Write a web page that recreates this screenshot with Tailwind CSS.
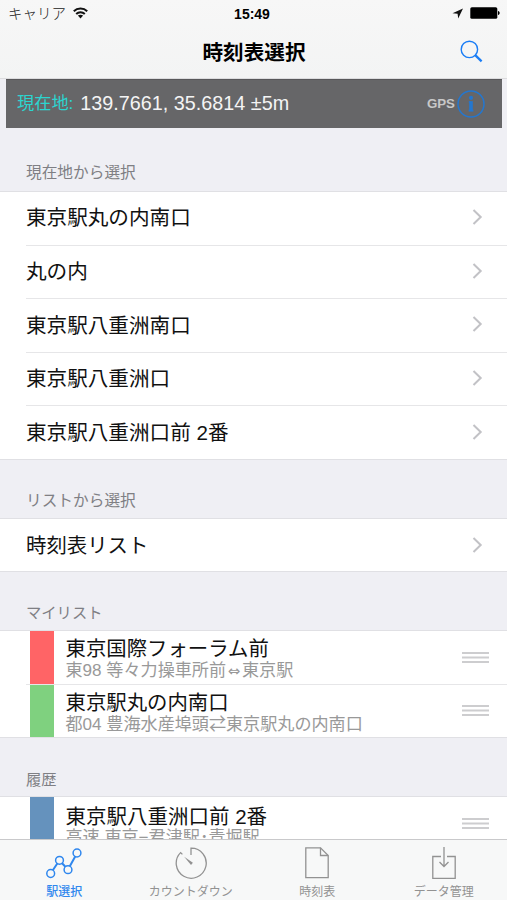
<!DOCTYPE html>
<html lang="ja" class="h-full">

<head>
    <meta charset="UTF-8">
    <title>時刻表選択</title>
    <meta name="viewport" content="width=device-width, initial-scale=1">

    <!-- Tailwind CSS -->
    <script src="https://cdn.jsdelivr.net/npm/@tailwindcss/browser@4"></script>
</head>

<body class="h-screen overflow-hidden flex flex-col bg-[#efeff4] text-[#111] font-['Liberation_Sans','Noto_Sans_CJK_JP',sans-serif]">

    <!-- Header -->
    <header class="h-[79px] shrink-0 bg-gradient-to-b from-[#f7f7f7] to-[#f3f4f4] border-b border-[#dcdcde]">
        <div class="h-7 grid grid-cols-3 items-center pl-2 pr-[7px]">
            <div class="flex items-center gap-[7px]">
                <span class="-mt-0.5 text-[14.5px] leading-6 text-[#222] font-['Noto_Sans_CJK_JP',sans-serif] font-light">キャリア</span>
                <svg class="-mt-0.5 w-[15px] h-3" viewBox="0 0 15 12" fill="none" stroke="#111" stroke-width="2">
                    <path d="M0.8 4.3C4.5 0.6 10.5 0.6 14.2 4.3" />
                    <path d="M3.2 7C5.6 4.6 9.4 4.6 11.8 7" />
                    <path d="M7.5 11.4L4.9 8.6C6.3 7.3 8.7 7.3 10.1 8.6Z" fill="#111" stroke="none" />
                </svg>
            </div>
            <span class="-ml-1 text-center text-[14px] leading-7 font-bold text-black">15:49</span>
            <div class="flex items-center justify-end gap-[7px] -mt-0.5">
                <svg class="w-[11px] h-[11px]" viewBox="0 0 11 11" fill="#111">
                    <path d="M11 0.5L6.2 10.5L5.6 5.8L0.5 5.2Z" />
                </svg>
                <svg class="w-[30px] h-3" viewBox="0 0 30 12" fill="#000">
                    <rect x="0.3" y="0.2" width="27" height="11.6" rx="1.6" />
                    <path d="M28 4C30.2 4.6 30.2 7.4 28 8Z" />
                </svg>
            </div>
        </div>
        <div class="h-12 grid grid-cols-[1fr_auto_1fr] items-center pr-6 pl-[25px]">
            <span></span>
            <h1 class="pt-0.5 text-[20.6px] leading-[46px] font-bold text-black">時刻表選択</h1>
            <svg class="w-[23px] h-[23px] justify-self-end -mt-0.5" viewBox="0 0 23 23" fill="none" stroke="#1a7df5">
                <circle cx="9.4" cy="9.4" r="8.2" stroke-width="1.4" />
                <path d="M15.2 15.2L21.6 21.3" stroke-width="2.3" />
            </svg>
        </div>
    </header>

    <!-- Current location -->
    <div class="h-[49px] shrink-0 ml-1.5 mr-[5px] pl-[11px] pr-[17px] flex items-center bg-[#666668] border-t border-[#58585a]">
        <span class="text-[17.2px] text-[#2bd5d0]">現在地:</span>
        <span class="ml-[7px] text-[19.8px] text-[#f4f4f4]">139.7661, 35.6814 ±5m</span>
        <span class="ml-auto text-[13.3px] font-bold text-[#c8c8c8]">GPS</span>
        <svg class="ml-[2px] w-7 h-7" viewBox="0 0 28 28" fill="none" stroke="#2477cf">
            <circle cx="14" cy="14" r="13" stroke-width="1.5" />
            <path d="M11.8 12H14M11.6 20.6H16.4" stroke-width="1.6" />
            <path d="M14 11.2V21.2" stroke-width="3.6" />
            <circle cx="14" cy="7.8" r="2.1" fill="#2477cf" stroke="none" />
        </svg>
    </div>

    <!-- Lists -->
    <main class="flex-1 min-h-0 overflow-hidden">
        <h2 class="h-[63px] pt-[33px] pl-[26px] text-[15.7px] leading-6 text-[#7f7f84]">現在地から選択</h2>
        <ul class="h-[269px] flex flex-col bg-white border-y border-[#e0e0e4] pl-[26px]">
            <li class="flex-1 flex items-center justify-between pr-6 border-b border-[#e6e6e8]">
                <span class="text-[20.6px]">東京駅丸の内南口</span>
                <svg class="-mt-0.5 w-[11px] h-4" viewBox="0 0 11 16" fill="none" stroke="#c2c2c6" stroke-width="2"><path d="M1.5 1L8.7 8L1.5 15" /></svg>
            </li>
            <li class="flex-1 flex items-center justify-between pr-6 border-b border-[#e6e6e8]">
                <span class="pt-px text-[20.6px]">丸の内</span>
                <svg class="-mt-0.5 w-[11px] h-4" viewBox="0 0 11 16" fill="none" stroke="#c2c2c6" stroke-width="2"><path d="M1.5 1L8.7 8L1.5 15" /></svg>
            </li>
            <li class="flex-1 flex items-center justify-between pr-6 border-b border-[#e6e6e8]">
                <span class="pt-px text-[20.6px]">東京駅八重洲南口</span>
                <svg class="-mt-0.5 w-[11px] h-4" viewBox="0 0 11 16" fill="none" stroke="#c2c2c6" stroke-width="2"><path d="M1.5 1L8.7 8L1.5 15" /></svg>
            </li>
            <li class="flex-1 flex items-center justify-between pr-6 border-b border-[#e6e6e8]">
                <span class="pt-px text-[20.6px]">東京駅八重洲口</span>
                <svg class="-mt-0.5 w-[11px] h-4" viewBox="0 0 11 16" fill="none" stroke="#c2c2c6" stroke-width="2"><path d="M1.5 1L8.7 8L1.5 15" /></svg>
            </li>
            <li class="flex-1 flex items-center justify-between pr-6">
                <span class="pt-0.5 text-[20.6px]">東京駅八重洲口前 2番</span>
                <svg class="-mt-0.5 w-[11px] h-4" viewBox="0 0 11 16" fill="none" stroke="#c2c2c6" stroke-width="2"><path d="M1.5 1L8.7 8L1.5 15" /></svg>
            </li>
        </ul>

        <h2 class="h-[58px] pt-[29px] pl-[26px] text-[15.7px] leading-6 text-[#7f7f84]">リストから選択</h2>
        <ul class="h-[54px] flex flex-col bg-white border-y border-[#e0e0e4] pl-[26px]">
            <li class="flex-1 flex items-center justify-between pr-6">
                <span class="pt-0.5 text-[20.4px]">時刻表リスト</span>
                <svg class="w-[11px] h-4" viewBox="0 0 11 16" fill="none" stroke="#c2c2c6" stroke-width="2"><path d="M1.5 1L8.7 8L1.5 15" /></svg>
            </li>
        </ul>

        <h2 class="h-[58px] pt-[29px] pl-[26px] text-[15.3px] leading-6 text-[#7f7f84]">マイリスト</h2>
        <ul class="h-[108px] flex flex-col bg-white border-y border-[#e0e0e4] pl-[26px]">
            <li class="flex-1 flex items-center pr-[18px] border-b border-[#e6e6e8]">
                <div class="ml-1 w-[23.5px] self-stretch bg-[#ff6466]"></div>
                <div class="ml-3 flex-1 pt-1">
                    <p class="text-[20.4px] leading-[23px]">東京国際フォーラム前</p>
                    <p class="text-[17.1px] leading-[19px] text-[#999]">東98 等々力操車所前<span class="inline-block w-4 text-center text-[15px] leading-4 font-['DejaVu_Sans']">⇔</span>東京駅</p>
                </div>
                <svg class="w-[27px] h-[11px]" viewBox="0 0 27 11" fill="#cdcdcf"><path d="M0 0H27V2H0ZM0 4.5H27V6.5H0ZM0 9H27V11H0Z" /></svg>
            </li>
            <li class="flex-1 flex items-center pr-[18px]">
                <div class="ml-1 w-[23.5px] self-stretch bg-[#7fd17f]"></div>
                <div class="ml-3 flex-1 pt-[5px]">
                    <p class="text-[20.4px] leading-[23px]">東京駅丸の内南口</p>
                    <p class="text-[17.1px] leading-[19px] text-[#999]">都04 豊海水産埠頭⇄東京駅丸の内南口</p>
                </div>
                <svg class="w-[27px] h-[11px]" viewBox="0 0 27 11" fill="#cdcdcf"><path d="M0 0H27V2H0ZM0 4.5H27V6.5H0ZM0 9H27V11H0Z" /></svg>
            </li>
        </ul>

        <h2 class="h-[58px] pt-[30px] pl-[26px] text-[15.3px] leading-6 text-[#7f7f84]">履歴</h2>
        <ul class="h-[54px] flex flex-col bg-white border-y border-[#e0e0e4] pl-[26px]">
            <li class="flex-1 flex items-center pr-[18px]">
                <div class="ml-1 w-[23.5px] self-stretch bg-[#6592bd]"></div>
                <div class="ml-3 flex-1 pt-[5px]">
                    <p class="text-[20.5px] leading-[23px]">東京駅八重洲口前 2番</p>
                    <p class="text-[17.1px] leading-[19px] text-[#999]">高速 東京−君津駅･青堀駅</p>
                </div>
                <svg class="w-[27px] h-[11px]" viewBox="0 0 27 11" fill="#cdcdcf"><path d="M0 0H27V2H0ZM0 4.5H27V6.5H0ZM0 9H27V11H0Z" /></svg>
            </li>
        </ul>
    </main>

    <!-- Tab bar -->
    <nav class="h-[61px] shrink-0 pl-px grid grid-cols-4 bg-[#f7f8f8] border-t border-[#c9c9cb] text-[12px] leading-4 text-[#929292]">
        <a class="flex flex-col items-center pt-[7px] gap-[5px] text-[#2f87ee]">
            <svg class="w-9 h-8" viewBox="0 0 36 32" fill="none" stroke="currentColor" stroke-width="1.5">
                <circle cx="4.7" cy="26.5" r="3.9" />
                <circle cx="13.5" cy="13.3" r="3.9" />
                <circle cx="22" cy="22.7" r="3.9" />
                <circle cx="31" cy="6" r="3.9" />
                <path d="M6.8 23.3L11.3 16.5M16.1 16.2L19.4 19.8M23.8 19.3L29.2 9.4" stroke-width="2" />
            </svg>
            <span class="font-medium">駅選択</span>
        </a>
        <a class="flex flex-col items-center pt-[7px] gap-[5px]">
            <svg class="w-8 h-8" viewBox="0 0 32 32" fill="none" stroke="currentColor" stroke-width="1.3">
                <path d="M16 8V1.2A15 15 0 1 1 5.6 5.6L7.4 7.4" />
                <path d="M9.2 9.8L17.9 15.8L16 18Z" fill="currentColor" stroke="none" />
            </svg>
            <span>カウントダウン</span>
        </a>
        <a class="flex flex-col items-center pt-[7px] gap-[5px]">
            <svg class="w-6 h-8" viewBox="0 0 24 32" fill="none" stroke="currentColor" stroke-width="1.3">
                <path d="M0.8 0.8H15.5L23.2 8.5V30.6H0.8Z" />
                <path d="M15.5 0.8V8.5H23.2" />
            </svg>
            <span>時刻表</span>
        </a>
        <a class="flex flex-col items-center pt-[7px] gap-[5px]">
            <svg class="w-6 h-8" viewBox="0 0 24 32" fill="none" stroke="currentColor" stroke-width="1.3">
                <path d="M9 9.5H0.8V31.3H23.2V9.5H15" />
                <path d="M12 0V19.5M7.5 15L12 19.5L16.5 15" />
            </svg>
            <span>データ管理</span>
        </a>
    </nav>

</body>

</html>
